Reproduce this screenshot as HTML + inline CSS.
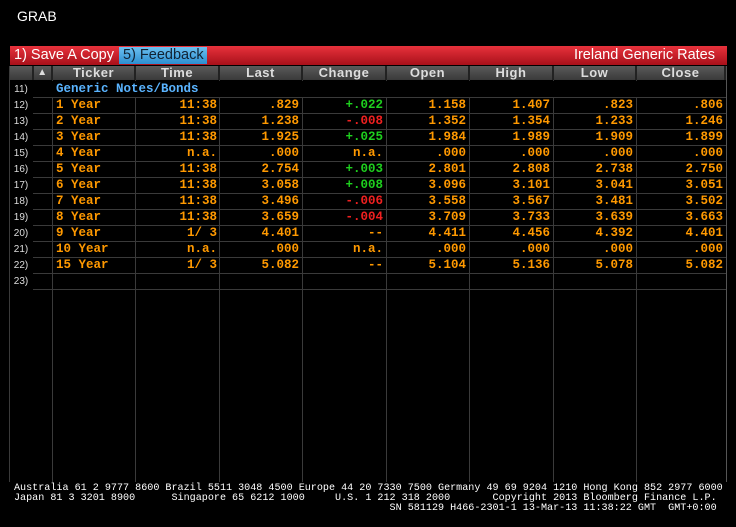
<!DOCTYPE html><html><head><style>
body{margin:0;width:736px;height:527px;background:#000;overflow:hidden;position:relative;font-family:"Liberation Mono",monospace}
.a{position:absolute}
.t{font-family:"Liberation Sans",sans-serif}
.v{position:absolute;width:1px;background:#3a3a3a;top:66px;height:416px}
.h{position:absolute;height:1px;background:#3a3a3a;left:33px;width:693px}
.hd{position:absolute;top:66px;height:14px;background:linear-gradient(#5a5a5a,#3a3a3a);color:#ddd;font:bold 13px "Liberation Sans",sans-serif;text-align:center;line-height:14px;border-right:2px solid #222;box-sizing:border-box;letter-spacing:0.5px}
.r{position:absolute;font:bold 12.5px "Liberation Mono",monospace;color:#f90;line-height:16px;white-space:pre}
.n{position:absolute;left:10px;width:22px;text-align:center;color:#ddd;font:10px "Liberation Sans",sans-serif;line-height:16px}
.f{position:absolute;left:14px;color:#fff;font:10.1px "Liberation Mono",monospace;white-space:pre;line-height:10px}
</style></head><body>
<div class="a t" style="left:17px;top:8px;color:#fff;font-size:14px">GRAB</div>
<div class="a" style="left:10px;top:46px;width:717px;height:19px;background:linear-gradient(#e8323c,#a8101a)"></div>
<div class="a t" style="left:14px;top:46px;color:#fff;font-size:14.5px;line-height:19px">1) Save A Copy</div>
<div class="a t" style="left:119px;top:47px;width:88px;height:17px;background:linear-gradient(#6cc0f0,#2c8ed0);color:#123;font-size:14.5px;line-height:17px;padding-left:4px;box-sizing:border-box">5) Feedback</div>
<div class="a t" style="right:21px;top:46px;color:#fff;font-size:14.5px;line-height:19px">Ireland Generic Rates</div>
<div class="v" style="left:9px"></div><div class="v" style="left:52px"></div><div class="v" style="left:135px"></div><div class="v" style="left:219px"></div><div class="v" style="left:302px"></div><div class="v" style="left:386px"></div><div class="v" style="left:469px"></div><div class="v" style="left:553px"></div><div class="v" style="left:636px"></div><div class="v" style="left:726px;background:#555"></div>
<div class="hd" style="left:10px;width:24px"></div><div class="hd" style="left:34px;width:19px;font-size:10px">▲</div><div class="hd" style="left:53px;width:83px">Ticker</div><div class="hd" style="left:136px;width:84px">Time</div><div class="hd" style="left:220px;width:83px">Last</div><div class="hd" style="left:303px;width:84px">Change</div><div class="hd" style="left:387px;width:83px">Open</div><div class="hd" style="left:470px;width:84px">High</div><div class="hd" style="left:554px;width:83px">Low</div><div class="hd" style="left:637px;width:89px">Close</div>
<div class="a" style="left:10px;top:81px;width:716px;height:16px;background:#000"></div>
<div class="n" style="top:82px">11)</div>
<div class="r" style="left:56px;top:81px;color:#5ab4ff">Generic Notes/Bonds</div>
<div id="rows"></div>
<script>
var d=[["1 Year","11:38",".829","+.022",1,"1.158","1.407",".823",".806"],["2 Year","11:38","1.238","-.008",2,"1.352","1.354","1.233","1.246"],["3 Year","11:38","1.925","+.025",1,"1.984","1.989","1.909","1.899"],["4 Year","n.a.",".000","n.a.",0,".000",".000",".000",".000"],["5 Year","11:38","2.754","+.003",1,"2.801","2.808","2.738","2.750"],["6 Year","11:38","3.058","+.008",1,"3.096","3.101","3.041","3.051"],["7 Year","11:38","3.496","-.006",2,"3.558","3.567","3.481","3.502"],["8 Year","11:38","3.659","-.004",2,"3.709","3.733","3.639","3.663"],["9 Year","1/ 3","4.401","--",0,"4.411","4.456","4.392","4.401"],["10 Year","n.a.",".000","n.a.",0,".000",".000",".000",".000"],["15 Year","1/ 3","5.082","--",0,"5.104","5.136","5.078","5.082"]];
var R=[219,302,386,469,553,636,726],h="";
h+='<div class="h" style="top:97px"></div>';
for(var i=0;i<12;i++){var y=98+i*16;h+='<div class="n" style="top:'+y+'px">'+(12+i)+')</div><div class="h" style="top:'+(y+15)+'px"></div>';
if(i<11){var r=d[i];h+='<div class="r" style="left:56px;top:'+(y-1)+'px">'+r[0]+'</div>';
h+='<div class="r" style="right:'+(736-217)+'px;top:'+(y-1)+'px">'+r[1]+'</div>';
var v=[r[2],r[3],r[5],r[6],r[7],r[8]];
for(var k=0;k<6;k++){var c=k==1?(r[4]==1?'#1ed01e':r[4]==2?'#f02020':'#f90'):'#f90';h+='<div class="r" style="right:'+(736-R[k+1]+3)+'px;top:'+(y-1)+'px;color:'+c+'">'+v[k]+'</div>';}}}
document.getElementById('rows').innerHTML=h;
</script>
<div class="f" style="top:484px">Australia 61 2 9777 8600 Brazil 5511 3048 4500 Europe 44 20 7330 7500 Germany 49 69 9204 1210 Hong Kong 852 2977 6000</div>
<div class="f" style="top:494px">Japan 81 3 3201 8900      Singapore 65 6212 1000     U.S. 1 212 318 2000       Copyright 2013 Bloomberg Finance L.P.</div>
<div class="f" style="top:504px">                                                              SN 581129 H466-2301-1 13-Mar-13 11:38:22 GMT  GMT+0:00</div>
</body></html>
